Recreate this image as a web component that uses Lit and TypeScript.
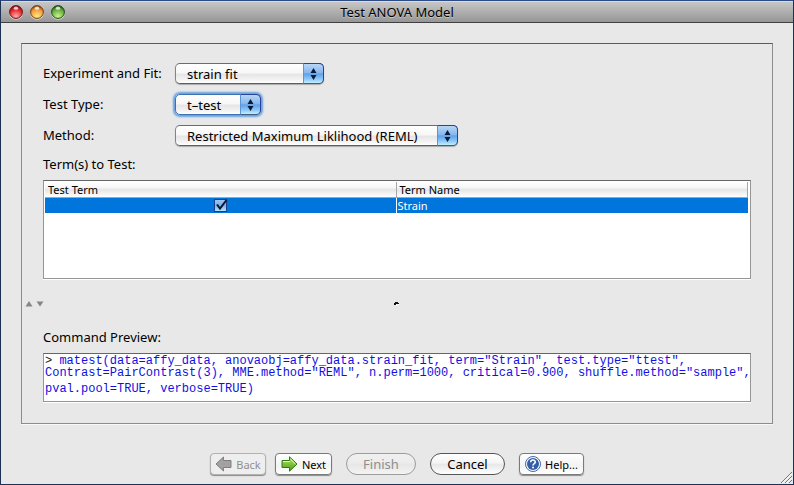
import { LitElement, html, css, svg } from "lit";
import { customElement, property, state } from "lit/decorators.js";

const stepper = svg`<path d="M6.5 0 9.5 5h-6z M6.5 12 9.5 7h-6z" fill="#0c1a33"/>`;

@customElement("popup-select")
class PopupSelect extends LitElement {
  @property() label = "";
  @property() value = "";
  @property() size = "medium";
  @property({ type: Boolean }) active = false;

  static styles = css`
    :host { display: block; }
    .row { display: grid; grid-template-columns: 132px auto; align-items: center; justify-content: start; height: 21px; }
    .caption { font-size: 13px; line-height: 21px; white-space: nowrap; }
    .box { position: relative; display: block; height: 21px; }
    .small { width: 86px; }
    .medium { width: 149px; }
    .large { width: 283px; }
    select {
      appearance: none; display: block; box-sizing: border-box; width: 100%; height: 21px; margin: 0;
      padding: 0 24px 0 11px; border: 1px solid #858585; border-top-color: #6c6c6c; border-bottom-color: #5e5e5e;
      border-radius: 5px; outline: none; color: #000; font: inherit; font-size: 13px; line-height: 18px;
      background: linear-gradient(#fff 0%, #f7f7f7 45%, #e6e6e6 55%, #f4f4f4 85%, #fff 100%);
      box-shadow: 0 1px 1px #0004;
    }
    .active select { border-color: #3a72b4; box-shadow: 0 0 2px 2px #6aa0de; }
    .cap {
      position: absolute; right: 0; top: 0; box-sizing: border-box; width: 21px; height: 21px; pointer-events: none;
      display: flex; align-items: center; justify-content: center;
      border: 1px solid #27449a; border-left-color: #5c95d6; border-bottom-color: #3d5f84; border-radius: 0 5px 5px 0;
      background: linear-gradient(#b9d6f5 0%, #86b8ee 45%, #5fa2e8 52%, #8fc8f8 80%, #c0f0ff 100%);
    }
  `;

  render() {
    return html`<div class="row">
      <label class="caption" for="field">${this.label}</label>
      <span class="box ${this.size} ${this.active ? "active" : ""}">
        <select id="field"><option>${this.value}</option></select>
        <span class="cap"><svg width="13" height="12" viewBox="0 0 13 12" aria-hidden="true">${stepper}</svg></span>
      </span>
    </div>`;
  }
}

@customElement("app-root")
class AppRoot extends LitElement {
  @state() checked = true;

  static styles = css`
    :host { display: block; font-family: "Noto Sans", "Open Sans", sans-serif; color: #000; }
    * { box-sizing: border-box; }
    .window {
      min-height: 100vh; display: flex; flex-direction: column; position: relative;
      border: 1px solid #1d3055; border-top-color: #2c4a86; background: #e8e8e8;
    }
    .titlebar {
      height: 22px; display: grid; grid-template-columns: 1fr auto 1fr; align-items: center;
      border-top: 1px solid #dcdcdc; border-bottom: 1px solid #404040;
      background: linear-gradient(#c6c6c6, #969696);
    }
    .lights { display: flex; gap: 7px; padding-left: 8px; }
    .light { width: 14px; height: 15px; padding: 0; border: 0; background: none; display: block; }
    .light svg { display: block; }
    h1 { margin: 0; font-size: 13px; line-height: 20px; font-weight: 400; text-shadow: 0 1px 0 #ffffff66; }
    .panel {
      flex: 1; margin: 20px 20px 0; padding: 19px 21px 21px; display: flex; flex-direction: column;
      border: 1px solid #8c8c8c; border-top-color: #5c5c5c; box-shadow: 0 1px 0 #f8f8f8;
    }
    .form { display: flex; flex-direction: column; gap: 10px; }
    .heading { margin: 0; font-size: 13px; font-weight: 400; line-height: 18px; }
    .terms-heading { padding: 9px 0 7px; }
    .tablebox {
      flex: 1; min-height: 99px; padding: 1px 2px 1px 1px; background: #fff;
      border: 1px solid #969696; border-top-color: #666; box-shadow: 0 1px 0 #fff;
    }
    table { width: 100%; table-layout: fixed; border-collapse: separate; border-spacing: 0; font-size: 11px; line-height: 15px; }
    th {
      height: 16px; padding: 0 3px; text-align: left; font-weight: 400;
      border-right: 1px solid #a6a6a6; border-bottom: 1px solid #a6a6a6;
      background: linear-gradient(#fff 0%, #f8f8f8 35%, #e6e6e6 52%, #f2f2f2 75%, #fff 100%);
    }
    td { height: 15px; padding: 0 1px; background: #0075dc; color: #fff; }
    td.mark { border-right: 1px solid #fff; }
    .tick { position: relative; display: block; width: 13px; height: 13px; margin: 0 auto; }
    .tick input {
      appearance: none; display: block; width: 13px; height: 13px; margin: 0;
      border: 1px solid #1c3f86; background: linear-gradient(#9cc4f0, #79b0ec 50%, #b6e4ff);
    }
    .tick svg { position: absolute; left: 1px; top: 0; pointer-events: none; }
    .splitter { height: 49px; margin: 0 -21px; padding: 0 3px; display: grid; grid-template-columns: 1fr auto 1fr; align-items: center; }
    .collapse { display: flex; gap: 3px; }
    .collapse button { width: 8px; height: 8px; padding: 0; border: 0; background: none; display: flex; align-items: center; }
    .command-heading { padding-bottom: 7px; }
    .preview {
      margin: 0; min-height: 49px; padding: 1px 1px 0; background: #fff; color: #1010e4;
      border: 1px solid #969696; border-top-color: #666; box-shadow: 0 1px 0 #fff;
      font-family: "Courier New", "Liberation Mono", monospace; font-size: 12px; line-height: 12px;
    }
    .preview code { display: block; font: inherit; white-space: pre; }
    .preview .last { line-height: 20px; }
    .prompt { color: #222; }
    .actions { display: flex; justify-content: center; align-items: center; gap: 14px; padding: 29px 0 9px; }
    .nav { display: flex; gap: 9px; }
    .btn {
      height: 22px; padding: 0; display: flex; align-items: center; justify-content: center;
      border: 1px solid #7a7a7a; font: inherit; color: #000; white-space: nowrap;
    }
    .square {
      width: 57px; gap: 4px; font-size: 11px; border-radius: 4px;
      background: linear-gradient(#fff, #f3f3f3 60%, #fff); box-shadow: 0 1px 1px #0006;
    }
    .back { width: 56px; }
    .help { width: 65px; }
    .pill {
      width: 75px; font-size: 13px; border-radius: 11px; border-color: #565656;
      background: linear-gradient(#fff 0%, #f4f4f4 45%, #e8e8e8 52%, #fff 100%);
    }
    .finish { width: 70px; }
    .btn:disabled { color: #8e8e8e; border-color: #b2b2b2; background: #eee; }
    .pill:disabled { border-color: #9c9c9c; background: linear-gradient(#f0f0f0 0%, #ececec 45%, #e6e6e6 52%, #f4f4f4 100%); }
    .grip { position: absolute; right: 1px; bottom: 1px; }
  `;

  private lights() {
    return [
      ["Close", "#6b1014", "#e8242b", "#ffb0a8", "r"],
      ["Minimize", "#7c3a0c", "#f09a3c", "#ffee80", "y"],
      ["Zoom", "#1d4a14", "#62ae3c", "#d2f48c", "n"],
    ].map(([name, edge, mid, glow, id]) => html`<button class="light" aria-label=${name}>
      <svg width="14" height="15" viewBox="0 0 14 15">
        <defs>
          <radialGradient id=${id} cx=".5" cy=".85" r=".85">
            <stop offset="0" stop-color=${glow} /><stop offset=".65" stop-color=${mid} /><stop offset="1" stop-color=${edge} />
          </radialGradient>
        </defs>
        <circle cx="7" cy="8" r="6.8" fill="#d8d8d8" />
        <circle cx="7" cy="7" r="6.4" fill="url(#${id})" stroke=${edge} stroke-width="1" />
        <ellipse cx="7" cy="3.2" rx="2.2" ry="1.6" fill="#fff" opacity=".75" />
      </svg>
    </button>`);
  }

  render() {
    return html`<main class="window">
      <header class="titlebar">
        <div class="lights">${this.lights()}</div>
        <h1>Test ANOVA Model</h1>
      </header>
      <section class="panel">
        <div class="form">
          <popup-select label="Experiment and Fit:" value="strain fit"></popup-select>
          <popup-select label="Test Type:" value="t–test" size="small" active></popup-select>
          <popup-select label="Method:" value="Restricted Maximum Liklihood (REML)" size="large"></popup-select>
        </div>
        <h2 class="heading terms-heading" id="terms">Term(s) to Test:</h2>
        <div class="tablebox">
          <table aria-labelledby="terms">
            <thead><tr><th>Test Term</th><th>Term Name</th></tr></thead>
            <tbody><tr>
              <td class="mark"><label class="tick">
                <input type="checkbox" aria-label="Strain" .checked=${this.checked}
                  @change=${(e: Event) => (this.checked = (e.target as HTMLInputElement).checked)} />
                ${this.checked ? html`<svg width="13" height="12" viewBox="0 0 13 12" aria-hidden="true">
                  <path d="M2 5.5 5 9.5 11.5 1" fill="none" stroke="#0b1530" stroke-width="2" /></svg>` : ""}
              </label></td>
              <td>Strain</td>
            </tr></tbody>
          </table>
        </div>
        <div class="splitter">
          <div class="collapse">
            <button aria-label="Collapse up"><svg width="8" height="6" viewBox="0 0 8 6"><path d="M4 0 7.5 5.5H.5z" fill="#868686" /></svg></button>
            <button aria-label="Collapse down"><svg width="8" height="6" viewBox="0 0 8 6"><path d="M4 5.5 7.5.5H.5z" fill="#868686" /></svg></button>
          </div>
          <svg width="6" height="6" viewBox="0 0 6 6" aria-hidden="true">
            <path d="M0 4V2h1V1h3v1h1v1H3v1z" fill="#111" /><path d="M2 3h1v2H2z M4 3h1v1H4z" fill="#fff" />
          </svg>
        </div>
        <h2 class="heading command-heading">Command Preview:</h2>
        <div class="preview">
          <code><span class="prompt">&gt;</span> matest(data=affy_data, anovaobj=affy_data.strain_fit, term="Strain", test.type="ttest",</code>
          <code>Contrast=PairContrast(3), MME.method="REML", n.perm=1000, critical=0.900, shuffle.method="sample",</code>
          <code class="last">pval.pool=TRUE, verbose=TRUE)</code>
        </div>
      </section>
      <footer class="actions">
        <div class="nav">
          <button class="btn square back" disabled>
            <svg width="17" height="16" viewBox="0 0 17 16" aria-hidden="true">
              <path d="M1 8 8.5 1v3.5H16v7H8.5V15z" fill="#a2a2a2" stroke="#7e7e7e" /></svg>Back
          </button>
          <button class="btn square">
            <svg width="17" height="16" viewBox="0 0 17 16" aria-hidden="true">
              <defs><linearGradient id="leaf" x2="0" y2="1"><stop stop-color="#b4e868" /><stop offset="1" stop-color="#4a9c14" /></linearGradient></defs>
              <path d="M16 8 8.5 .8V4.500H1v7h7.5v3.700z" fill="url(#leaf)" stroke="#2f7a10" />
              <path d="M9.500 3.200 14.400 8M2 5.500h7" stroke="#e2f9c0" fill="none" /></svg>Next
          </button>
        </div>
        <button class="btn pill finish" disabled>Finish</button>
        <button class="btn pill">Cancel</button>
        <button class="btn square help">
          <svg width="16" height="16" viewBox="0 0 16 16" aria-hidden="true">
            <circle cx="8" cy="8" r="7.5" fill="#fff" stroke="#3f68ac" />
            <circle cx="8" cy="8" r="6" fill="#345fa8" />
            <path d="M5.7 6.2C5.7 3.4 10.3 3.4 10.3 6 10.3 7.6 8 7.5 8 9.4" fill="none" stroke="#fff" stroke-width="1.6" />
            <circle cx="8" cy="11.6" r="1" fill="#fff" /></svg>Help...
        </button>
      </footer>
      <svg class="grip" width="12" height="12" viewBox="0 0 12 12" aria-hidden="true">
        <path d="M1 12 12 1M5 12 12 5M9 12 12 9" stroke="#777" fill="none" />
        <path d="M2.5 12 12 2.5M6.5 12 12 6.5" stroke="#fff" fill="none" />
      </svg>
    </main>`;
  }
}
